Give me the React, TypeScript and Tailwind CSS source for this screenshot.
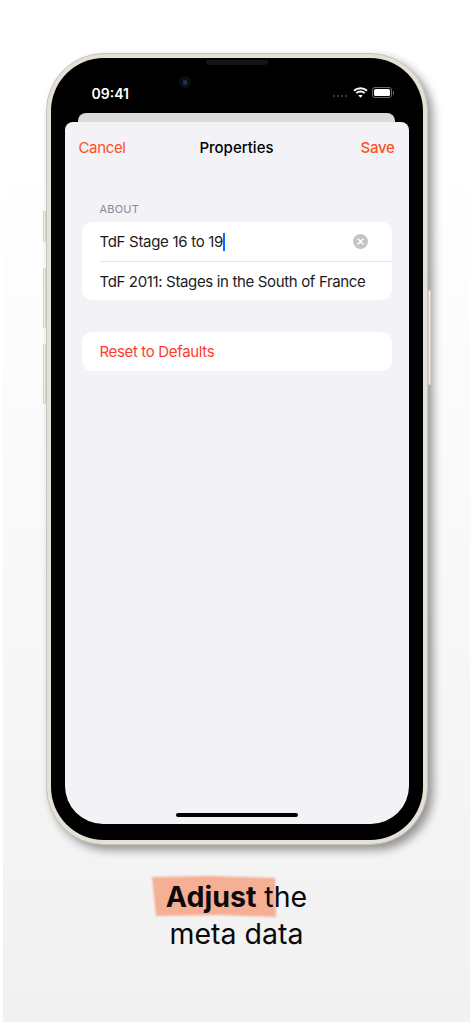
const sans = { fontFamily: 'Inter, "Noto Sans", sans-serif' };

function SideButton({ className }: { className: string }) {
  return <div className={`absolute w-[3px] rounded-[1px] border border-[#d6d1c9] bg-[#efebe5] ${className}`} />;
}

function StatusBar() {
  return (
    <div className="relative flex h-[55px] items-start justify-between pl-[27px] pr-[15px] pt-[27px]">
      <span className="text-[14px] font-semibold leading-[18px] text-white">09:41</span>
      <div className="absolute left-[141px] top-[2px] h-[5px] w-[62px] rounded-b-[4px] bg-[#141414]" />
      <div className="absolute left-[114px] top-[18px] flex h-[12px] w-[12px] items-center justify-center rounded-full bg-[#0c0e14]">
        <div className="h-[5px] w-[4px] rounded-full bg-[#1d3550]" />
      </div>
      <div className="flex items-center gap-[4px] pt-[2px]">
        <div className="mr-[2px] mt-[7px] flex gap-[2px]">
          <i className="h-[2px] w-[2px] rounded-full bg-[#4a4a4a]" />
          <i className="h-[2px] w-[2px] rounded-full bg-[#4a4a4a]" />
          <i className="h-[2px] w-[2px] rounded-full bg-[#4a4a4a]" />
          <i className="h-[2px] w-[2px] rounded-full bg-[#4a4a4a]" />
        </div>
        <svg width="15" height="11" viewBox="0 0 15 11" fill="none" stroke="white" strokeWidth="1.9">
          <path d="M1 3.8C4.6.4 10.4.4 14 3.8" />
          <path d="M3.3 6.1c2.3-2.1 6.1-2.1 8.4 0" />
          <path d="M7.5 10.8 5.4 8.4c1.1-1 3.1-1 4.2 0z" fill="white" stroke="none" />
        </svg>
        <div className="flex items-center">
          <div className="h-[11px] w-[20px] rounded-[3px] border border-[#6b6b6b] p-[1px]">
            <div className="h-full w-full rounded-[1.5px] bg-white" />
          </div>
          <div className="ml-[0.5px] h-[4px] w-[1px] rounded-r-[1px] bg-[#6b6b6b]" />
        </div>
      </div>
    </div>
  );
}

function SheetContent() {
  return (
    <div className="relative flex h-[702px] flex-col rounded-t-[8px] rounded-b-[38px] bg-[#f2f2f7] text-[15px] tracking-[-0.35px]">
      <div className="grid h-[52px] grid-cols-3 items-center pl-[14px] pr-[14px] pt-[1px]">
        <span className="text-[#ff4f1f]">Cancel</span>
        <span className="text-center font-medium tracking-normal text-black">Properties</span>
        <span className="text-right font-medium tracking-[-0.3px] text-[#ff4f1f]">Save</span>
      </div>
      <div className="px-[17px] pt-[28px]">
        <div className="pb-[6px] pl-[18px] text-[11px] leading-[14px] tracking-[0.2px] text-[#8a8a8e]">ABOUT</div>
        <div className="rounded-[10px] bg-white text-[#1c1c1e]">
          <div className="ml-[18px] flex h-[40px] items-center border-b border-[#e6e6ea] pr-[24px]">
            <span className="pt-[1px] tracking-[-0.3px]">TdF Stage 16 to 19</span>
            <span className="h-[18px] w-[2px] bg-[#0a6cff]" />
            <span className="ml-auto flex h-[15px] w-[15px] items-center justify-center rounded-full bg-[#c4c4c6]">
              <svg width="7" height="7" viewBox="0 0 7 7" stroke="white" strokeWidth="1.5" strokeLinecap="round">
                <path d="M1 1l5 5M6 1 1 6" />
              </svg>
            </span>
          </div>
          <div className="flex h-[38px] items-center pl-[18px] pt-[2px]">TdF 2011: Stages in the South of France</div>
        </div>
        <div className="mt-[32px] flex h-[39px] items-center rounded-[10px] bg-white pl-[18px] pt-[1px] text-[#ff3b30]">
          Reset to Defaults
        </div>
      </div>
      <div className="absolute bottom-[7px] left-[111px] h-[4px] w-[122px] rounded-full bg-black" />
    </div>
  );
}

function Phone() {
  return (
    <div className="relative h-[792px] w-[382px] shrink-0">
      <SideButton className="left-[-3px] top-[158px] h-[31px]" />
      <SideButton className="left-[-3px] top-[215px] h-[60px]" />
      <SideButton className="left-[-3px] top-[291px] h-[60px]" />
      <SideButton className="right-[-3px] top-[237px] h-[95px]" />
      <div className="h-full rounded-[58px] border border-[#c9c4ba] bg-[#e6e1d8] p-[4px] shadow-[5px_5px_10px_rgba(0,0,0,0.4)]">
        <div className="h-full rounded-[53px] bg-black px-[14px] pb-[14px]">
          <StatusBar />
          <div className="ml-[13px] mr-[14px] h-[9px] rounded-t-[8px] bg-[#dcdcdc]" />
          <SheetContent />
        </div>
      </div>
    </div>
  );
}

export default function App() {
  return (
    <div className="h-[1024px] w-[472px] overflow-hidden bg-white pb-[2px] pl-[3px] pr-[2px]" style={sans}>
      <div className="flex h-full flex-col items-center bg-gradient-to-b from-white from-[15%] to-[#f1f1f1] pt-[53px]">
        <Phone />
        <div className="mt-[33px] text-center text-[28.5px] leading-[37px] text-[#0a0a0a]">
          <div className="relative">
            <svg className="absolute left-[-15px] top-[-2px] overflow-visible blur-[1px]" width="126" height="42" viewBox="0 0 126 42">
              <path d="M1 1 60 0 124 2 125 41 70 39 5 40z" fill="#f4ab8e" opacity="0.95" />
            </svg>
            <span className="relative font-bold">Adjust</span>
            <span className="relative"> the</span>
          </div>
          <div>meta data</div>
        </div>
      </div>
    </div>
  );
}
